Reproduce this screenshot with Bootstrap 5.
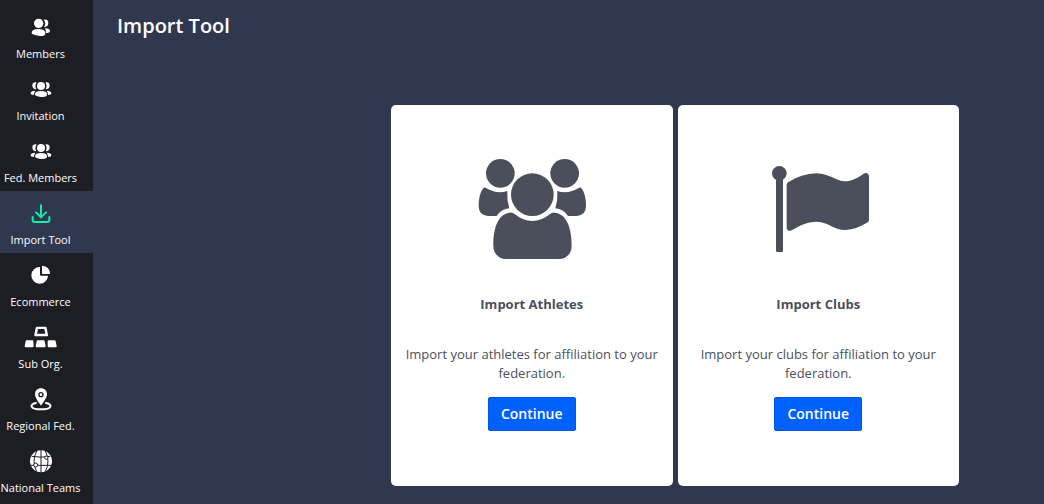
<!DOCTYPE html>
<html lang="en">
<head>
<meta charset="utf-8">
<meta name="viewport" content="width=device-width, initial-scale=1">
<title>Import Tool</title>
<link href="https://cdn.jsdelivr.net/npm/bootstrap@5.3.0/dist/css/bootstrap.min.css" rel="stylesheet">
<style>
  body { font-family: "Open Sans", "Noto Sans", sans-serif; background: #303850; }
  .side { flex: 0 0 93px; background: #1d1e23; padding-top: 5px; }
  .side-link { height: 62px; padding: 11px 12px 5px 0; gap: 6px; font-size: 11px; line-height: 16px; color: #fff; text-decoration: none; white-space: nowrap; }
  .side-link:hover { color: #fff; }
  .side-link svg { width: 33px; height: 24px; fill: currentColor; flex: none; }
  .side-link.active { background: #303850; }
  .side-link.active svg { color: #0df2a3; }
  .page-title { font-size: 20px; line-height: 28px; font-weight: 600; color: #fff; margin: 12px 24px 65px; }
  .tiles { padding: 0 85px 18px 298px; gap: 5px; }
  .tile { flex: 1 1 0; border: 0; border-radius: 5px; padding: 53px 10px 55px; color: #4b4f5b; }
  .tile svg { width: 108px; height: 102px; fill: currentColor; }
  .tile h2 { font-size: 13px; line-height: 20px; font-weight: 700; margin: 34px 0 31px; }
  .tile p { font-size: 13px; line-height: 19px; margin: 0 0 14px; }
  .btn-go { height: 34px; background: #0061ff; border: 1px solid #0057e6; border-radius: 2px; color: #fff; font-size: 14px; line-height: 20px; font-weight: 600; padding: 6px 12px; }
  .btn-go:hover { background: #0057e6; color: #fff; }
</style>
</head>
<body>
<div class="d-flex min-vh-100">
  <nav class="side" aria-label="Main">
    <a href="#" class="side-link d-flex flex-column align-items-center">
      <svg viewBox="72 54 99 72" aria-hidden="true"><circle cx="116" cy="76" r="14"/><path d="M131 65q14-2 14 10t-13 12q8-11-1-22zM95 105q0-12 20-12t21 12-21 8-20-8zM134 91q17 0 16 9-1 6-12 5 1-9-4-14z"/></svg>
      Members</a>
    <a href="#" class="side-link d-flex flex-column align-items-center">
      <svg viewBox="72 236 99 72" aria-hidden="true"><circle cx="123" cy="260" r="12"/><path d="M110 249q-13-2-13 9 0 12 12 12-6-10 1-21zM136 249q13-2 13 9 0 12-12 12 6-10-1-21zM105 285q0-10 18-10t18 10-18 8-18-8zM106 274q-14 0-14 8 0 5 10 5 0-8 4-13zM140 274q14 0 14 8 0 5-10 5 0-8-4-13z"/></svg>
      Invitation</a>
    <a href="#" class="side-link d-flex flex-column align-items-center">
      <svg viewBox="72 236 99 72" aria-hidden="true"><circle cx="123" cy="260" r="12"/><path d="M110 249q-13-2-13 9 0 12 12 12-6-10 1-21zM136 249q13-2 13 9 0 12-12 12 6-10-1-21zM105 285q0-10 18-10t18 10-18 8-18-8zM106 274q-14 0-14 8 0 5 10 5 0-8 4-13zM140 274q14 0 14 8 0 5-10 5 0-8-4-13z"/></svg>
      Fed. Members</a>
    <a href="#" class="side-link active d-flex flex-column align-items-center" aria-current="page">
      <svg viewBox="72 217 99 72" aria-hidden="true"><path d="M123 227v35M108 248l15 15 15-15M98 262v9q0 6 6 6h38q6 0 6-6v-9" fill="none" stroke="currentColor" stroke-width="6" stroke-linecap="round" stroke-linejoin="round"/></svg>
      Import Tool</a>
    <a href="#" class="side-link d-flex flex-column align-items-center">
      <svg viewBox="72 28 99 72" aria-hidden="true"><path d="M120 37a25 25 0 1 0 24 26h-21q-3 0-3-3zM126 33q23 1 24 25h-22q-2 0-2-2z"/></svg>
      Ecommerce</a>
    <a href="#" class="side-link d-flex flex-column align-items-center">
      <svg viewBox="73 214 99 72" aria-hidden="true"><path fill-rule="evenodd" d="M112 216h25q3 0 4 3l4 22q1 4-3 4h-35q-4 0-3-4l4-22q1-3 4-3zm3 7-3 14h25l-3-14z"/><path d="M81 257h17q3 0 3 3l1 14q0 4-4 4H79q-4 0-4-4l3-14q0-3 3-3zM114 257h18q3 0 3 3l3 14q0 4-4 4h-22q-4 0-4-4l3-14q0-3 3-3zM147 257h17q3 0 4 3l3 14q1 4-3 4h-20q-4 0-4-4v-14q0-3 3-3z"/></svg>
      Sub Org.</a>
    <a href="#" class="side-link d-flex flex-column align-items-center">
      <svg viewBox="72 38 99 72" aria-hidden="true"><path fill-rule="evenodd" d="M123 39c10 0 18 7 18 18 0 12-18 34-18 34s-18-22-18-34c0-11 8-18 18-18zm0 11a8 8 0 1 0 0 16 8 8 0 0 0 0-16z"/><circle cx="123" cy="58" r="4"/><path d="M108 83c-20 3-20 19 15 19s35-16 15-19" fill="none" stroke="currentColor" stroke-width="6" stroke-linecap="round"/></svg>
      Regional Fed.</a>
    <a href="#" class="side-link d-flex flex-column align-items-center">
      <svg viewBox="72 224 99 72" aria-hidden="true"><circle cx="123" cy="258" r="33"/><g fill="none" stroke="#1d1e23" stroke-width="3"><path d="M123 224v68M90 270h66M95 243q28 5 56 0M110 227q-16 31 0 62M136 227q16 31 0 62"/></g><circle cx="107" cy="269" r="6" fill="#fff" stroke="#1d1e23" stroke-width="3"/><circle cx="139" cy="247" r="5" fill="#fff" stroke="#1d1e23" stroke-width="3"/></svg>
      National Teams</a>
  </nav>

  <main class="flex-fill">
    <h1 class="page-title">Import Tool</h1>
    <div class="tiles d-flex">
      <section class="tile card align-items-center text-center">
        <svg viewBox="54 54 324 306" aria-hidden="true">
          <circle cx="121" cy="100" r="43"/><circle cx="314" cy="100" r="43"/><circle cx="217" cy="164" r="64"/>
          <path d="M77 143q22 13 42 14 12 0 23-4-2 26 6 52-24 2-38 23H84q-28-2-28-30 0-34 12-51 3-5 9-4z"/>
          <path d="M357 143q-22 13-42 14-12 0-23-4 2 26-6 52 24 2 38 23h26q28-2 28-30 0-34-12-51-3-5-9-4z"/>
          <path d="M150 218q8-1 15 5 24 20 52 20t52-20q7-6 15-5c36 3 51 46 51 99 0 24-16 40-38 40H138c-22 0-38-16-38-40 0-53 14-96 50-99z"/>
        </svg>
        <h2>Import Athletes</h2>
        <p>Import your athletes for affiliation to your federation.</p>
        <button type="button" class="btn btn-go">Continue</button>
      </section>
      <section class="tile card align-items-center text-center">
        <svg viewBox="42 24 324 306" aria-hidden="true">
          <circle cx="88" cy="70" r="22"/><path d="M78 84h21v218q0 4-4 4H82q-4 0-4-4z"/>
          <path d="M110 105q0-5 4-8 40-26 85-27c42 1 58 24 86 24 20 0 38-11 56-23 8-5 16-1 16 8v130q0 5-4 8-34 22-66 23c-38 0-50-24-87-25-28 0-51 12-75 26-7 4-15 0-15-8z"/>
        </svg>
        <h2>Import Clubs</h2>
        <p>Import your clubs for affiliation to your federation.</p>
        <button type="button" class="btn btn-go">Continue</button>
      </section>
    </div>
  </main>
</div>
<script src="https://cdn.jsdelivr.net/npm/bootstrap@5.3.0/dist/js/bootstrap.bundle.min.js"></script>
</body>
</html>
